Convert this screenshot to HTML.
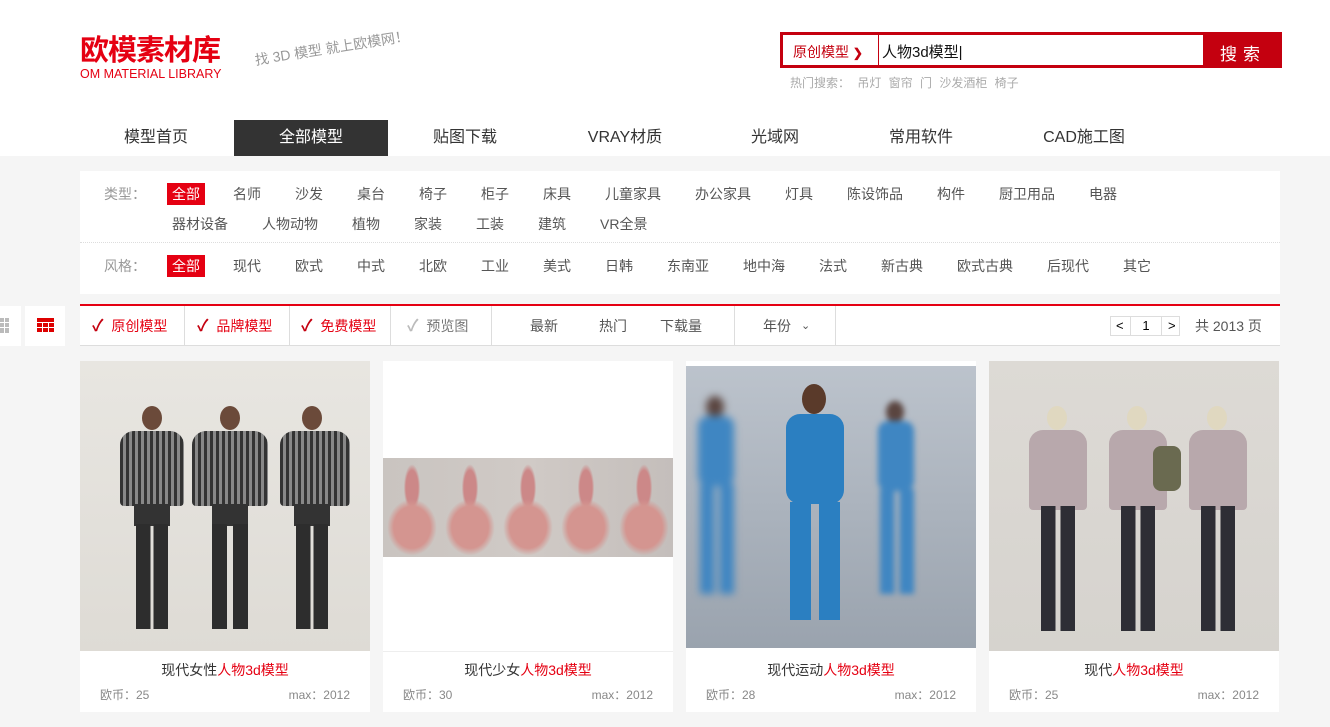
<!DOCTYPE html>
<html><head><meta charset="utf-8"><style>
*{margin:0;padding:0;box-sizing:border-box}
body{width:1330px;height:727px;overflow:hidden;background:#f5f5f5;font-family:"Liberation Sans","Noto Sans CJK SC",sans-serif;position:relative}
.a{position:absolute}
.top{left:0;top:0;width:1330px;height:156px;background:#fff}
.nav span{position:absolute;top:120px;height:36px;line-height:36px;font-size:16px;color:#333;text-align:center}
.fb{left:80px;top:171px;width:1200px;height:123px;background:#fff;font-size:14px;color:#555}
.fb span{position:absolute;white-space:nowrap}
.sel{background:#e50012;color:#fff!important;padding:0 5px;height:22px;line-height:22px}
.tb{left:80px;top:304px;width:1200px;height:42px;background:#fff;border-top:2px solid #e50012;border-bottom:1px solid #ddd;font-size:14px}
.tb span{position:absolute;top:0;height:40px;line-height:40px;white-space:nowrap}
.sep{position:absolute;top:0;width:1px;height:40px;background:#ddd}
.card{top:361px;width:290px;height:351px;background:#fff}
.card .img{position:absolute;left:0;top:0;width:290px;height:290px;overflow:hidden}
.card .t{position:absolute;top:299px;width:290px;text-align:center;font-size:14px;color:#333}
.card .t b{font-weight:normal;color:#e50012}
.card .m{position:absolute;top:325px;font-size:12px;color:#888}
.fig{position:absolute}
.fig i{position:absolute;display:block}
</style></head><body>
<div class="a top"></div>
<div class="a" style="left:80px;top:35px;font-size:29px;font-weight:bold;color:#e50012;letter-spacing:-1px;line-height:32px">欧模素材库</div>
<div class="a" style="left:80px;top:67px;font-size:12.5px;color:#e50012">OM MATERIAL LIBRARY</div>
<div class="a" style="left:255px;top:50px;font-size:14px;color:#999;transform:rotate(-9deg);transform-origin:left;white-space:nowrap">找 3D 模型 就上欧模网！</div>
<div class="a" style="left:780px;top:32px;width:502px;height:36px;background:#c4000f"></div>
<div class="a" style="left:783px;top:35px;width:420px;height:30px;background:#fff"></div>
<div class="a" style="left:878px;top:35px;width:1px;height:30px;background:#c4000f"></div>
<div class="a" style="left:793px;top:42px;font-size:14px;color:#c4000f">原创模型 <span style="font-size:12px;font-weight:bold">❯</span></div>
<div class="a" style="left:882px;top:41px;font-size:15px;color:#111">人物3d模型|</div>
<div class="a" style="left:1220px;top:40px;font-size:17px;color:#fff;letter-spacing:6px">搜索</div>
<div class="a" style="left:790px;top:74px;font-size:12px;color:#aaa;word-spacing:4px">热门搜索： 吊灯 窗帘 门 沙发酒柜 椅子</div>
<div class="nav">
<span style="left:104px;width:104px">模型首页</span>
<span style="left:234px;width:154px;background:#333;color:#fff">全部模型</span>
<span style="left:410px;width:110px">贴图下载</span>
<span style="left:570px;width:110px">VRAY材质</span>
<span style="left:720px;width:110px">光域网</span>
<span style="left:866px;width:110px">常用软件</span>
<span style="left:1024px;width:120px">CAD施工图</span>
</div>
<div class="a fb">
<span style="left:24px;top:13px;color:#999">类型：</span>
<span class="sel" style="left:87px;top:12px">全部</span>
<span style="left:153px;top:13px">名师</span><span style="left:215px;top:13px">沙发</span><span style="left:277px;top:13px">桌台</span><span style="left:339px;top:13px">椅子</span><span style="left:401px;top:13px">柜子</span><span style="left:463px;top:13px">床具</span><span style="left:525px;top:13px">儿童家具</span><span style="left:615px;top:13px">办公家具</span><span style="left:705px;top:13px">灯具</span><span style="left:767px;top:13px">陈设饰品</span><span style="left:857px;top:13px">构件</span><span style="left:919px;top:13px">厨卫用品</span><span style="left:1009px;top:13px">电器</span>
<span style="left:92px;top:43px">器材设备</span><span style="left:182px;top:43px">人物动物</span><span style="left:272px;top:43px">植物</span><span style="left:334px;top:43px">家装</span><span style="left:396px;top:43px">工装</span><span style="left:458px;top:43px">建筑</span><span style="left:520px;top:43px">VR全景</span>
<div class="a" style="left:0;top:71px;width:1200px;border-top:1px dotted #ddd"></div>
<span style="left:24px;top:85px;color:#999">风格：</span>
<span class="sel" style="left:87px;top:84px">全部</span>
<span style="left:153px;top:85px">现代</span><span style="left:215px;top:85px">欧式</span><span style="left:277px;top:85px">中式</span><span style="left:339px;top:85px">北欧</span><span style="left:401px;top:85px">工业</span><span style="left:463px;top:85px">美式</span><span style="left:525px;top:85px">日韩</span><span style="left:587px;top:85px">东南亚</span><span style="left:663px;top:85px">地中海</span><span style="left:739px;top:85px">法式</span><span style="left:801px;top:85px">新古典</span><span style="left:877px;top:85px">欧式古典</span><span style="left:967px;top:85px">后现代</span><span style="left:1043px;top:85px">其它</span>
</div>
<div class="a" style="left:0;top:306px;width:21px;height:40px;background:#fff"></div>
<div class="a" style="left:0;top:318px;width:10px;height:15px;background:repeating-linear-gradient(90deg,#bbb 0 4px,#fff 4px 5px)"></div>
<div class="a" style="left:0;top:322px;width:10px;height:1px;background:#fff"></div><div class="a" style="left:0;top:327px;width:10px;height:1px;background:#fff"></div>
<div class="a" style="left:25px;top:306px;width:40px;height:40px;background:#fff"></div>
<div class="a" style="left:37px;top:318px;width:17px;height:15px;background:repeating-linear-gradient(#d00 0 4px,#fff 4px 5px)"></div>
<div class="a" style="left:42px;top:322px;width:1px;height:11px;background:#fff"></div><div class="a" style="left:48px;top:322px;width:1px;height:11px;background:#fff"></div>
<div class="a tb">
<span style="left:12px;color:#e50012"><b style="color:#c4000f;font-size:16px">✓</b>&nbsp; 原创模型</span><div class="sep" style="left:104px"></div>
<span style="left:117px;color:#e50012"><b style="color:#c4000f;font-size:16px">✓</b>&nbsp; 品牌模型</span><div class="sep" style="left:209px"></div>
<span style="left:221px;color:#e50012"><b style="color:#c4000f;font-size:16px">✓</b>&nbsp; 免费模型</span><div class="sep" style="left:310px"></div>
<span style="left:327px;color:#777"><b style="color:#bbb;font-size:16px">✓</b>&nbsp; 预览图</span><div class="sep" style="left:411px"></div>
<span style="left:450px;color:#555">最新</span><span style="left:519px;color:#555">热门</span><span style="left:580px;color:#555">下载量</span>
<div class="sep" style="left:654px"></div>
<span style="left:683px;color:#555">年份 <span style="font-size:11px;margin-left:10px">⌄</span></span>
<div class="sep" style="left:755px"></div>
<div class="a" style="left:1030px;top:10px;width:70px;height:20px;border:1px solid #ddd;font-size:13px;line-height:18px"><span style="left:5px;height:18px;line-height:18px">&lt;</span><span style="left:19px;width:32px;height:18px;line-height:18px;text-align:center;border-left:1px solid #ddd;border-right:1px solid #ddd">1</span><span style="left:57px;height:18px;line-height:18px">&gt;</span></div>
<span style="left:1115px;color:#555">共 2013 页</span>
</div>

<div class="a card" style="left:80px"><div class="img" style="background:linear-gradient(#e8e6e1,#dedbd5)">
<div class="fig" style="left:40px;top:45px"><i style="left:22px;top:0;width:20px;height:24px;border-radius:50%;background:#6b4a3a"></i><i style="left:0;top:25px;width:64px;height:75px;border-radius:14px 14px 4px 4px;background:repeating-linear-gradient(90deg,#333 0 3px,#888 3px 6px)"></i><i style="left:14px;top:98px;width:36px;height:22px;background:#333"></i><i style="left:16px;top:118px;width:32px;height:105px;background:linear-gradient(90deg,#2d2d2d 0 45%,transparent 45% 55%,#2d2d2d 55%)"></i></div>
<div class="fig" style="left:118px;top:45px"><i style="left:22px;top:0;width:20px;height:24px;border-radius:50%;background:#6b4a3a"></i><i style="left:-6px;top:25px;width:76px;height:75px;border-radius:14px 14px 4px 4px;background:repeating-linear-gradient(90deg,#333 0 3px,#888 3px 6px)"></i><i style="left:14px;top:98px;width:36px;height:22px;background:#333"></i><i style="left:14px;top:118px;width:36px;height:105px;background:linear-gradient(90deg,#2d2d2d 0 42%,transparent 42% 58%,#2d2d2d 58%)"></i></div>
<div class="fig" style="left:200px;top:45px"><i style="left:22px;top:0;width:20px;height:24px;border-radius:50%;background:#6b4a3a"></i><i style="left:0;top:25px;width:70px;height:75px;border-radius:14px 14px 4px 4px;background:repeating-linear-gradient(90deg,#333 0 3px,#888 3px 6px)"></i><i style="left:14px;top:98px;width:36px;height:22px;background:#333"></i><i style="left:16px;top:118px;width:32px;height:105px;background:linear-gradient(90deg,#2d2d2d 0 45%,transparent 45% 55%,#2d2d2d 55%)"></i></div>
</div><div class="t">现代女性<b>人物3d模型</b></div><div class="m" style="left:20px">欧币：25</div><div class="m" style="right:20px">max：2012</div></div>

<div class="a card" style="left:383px"><div class="img" style="background:#fff"><div class="a" style="left:0;top:97px;width:290px;height:99px;background:radial-gradient(ellipse 9% 30% at 10% 70%,#d49590 0 70%,transparent 95%),radial-gradient(ellipse 9% 30% at 30% 70%,#d49590 0 70%,transparent 95%),radial-gradient(ellipse 9% 30% at 50% 70%,#d49590 0 70%,transparent 95%),radial-gradient(ellipse 9% 30% at 70% 70%,#d49590 0 70%,transparent 95%),radial-gradient(ellipse 9% 30% at 90% 70%,#d49590 0 70%,transparent 95%),radial-gradient(ellipse 3% 25% at 10% 30%,#c88 0 70%,transparent 95%),radial-gradient(ellipse 3% 25% at 30% 30%,#c88 0 70%,transparent 95%),radial-gradient(ellipse 3% 25% at 50% 30%,#c88 0 70%,transparent 95%),radial-gradient(ellipse 3% 25% at 70% 30%,#c88 0 70%,transparent 95%),radial-gradient(ellipse 3% 25% at 90% 30%,#c88 0 70%,transparent 95%),linear-gradient(90deg,#c9c4c0,#d0cac6,#c4bebb)"></div></div><div class="a" style="left:0;top:290px;width:290px;border-top:1px solid #eee"></div><div class="t">现代少女<b>人物3d模型</b></div><div class="m" style="left:20px">欧币：30</div><div class="m" style="right:20px">max：2012</div></div>

<div class="a card" style="left:686px"><div class="img" style="top:5px;height:282px;background:linear-gradient(#bcc3cc,#9aa3ae)">
<div class="fig" style="left:12px;top:30px;filter:blur(4px)"><i style="left:8px;top:0;width:18px;height:22px;border-radius:50%;background:#5a4540"></i><i style="left:0;top:20px;width:36px;height:70px;border-radius:10px;background:#3f86c2"></i><i style="left:2px;top:88px;width:34px;height:110px;background:linear-gradient(90deg,#3f86c2 0 42%,transparent 42% 58%,#3f86c2 58%)"></i></div>
<div class="fig" style="left:100px;top:18px"><i style="left:16px;top:0;width:24px;height:30px;border-radius:50%;background:#5a3a2a"></i><i style="left:0;top:30px;width:58px;height:90px;border-radius:14px;background:#2b7fc1"></i><i style="left:4px;top:118px;width:50px;height:118px;background:linear-gradient(90deg,#2b7fc1 0 42%,transparent 42% 58%,#2b7fc1 58%)"></i></div>
<div class="fig" style="left:192px;top:35px;filter:blur(3px)"><i style="left:8px;top:0;width:18px;height:22px;border-radius:50%;background:#5a4540"></i><i style="left:0;top:20px;width:36px;height:70px;border-radius:10px;background:#3f86c2"></i><i style="left:2px;top:88px;width:34px;height:105px;background:linear-gradient(90deg,#3f86c2 0 42%,transparent 42% 58%,#3f86c2 58%)"></i></div>
</div><div class="t">现代运动<b>人物3d模型</b></div><div class="m" style="left:20px">欧币：28</div><div class="m" style="right:20px">max：2012</div></div>

<div class="a card" style="left:989px"><div class="img" style="background:linear-gradient(#dddad5,#d6d3ce)">
<div class="fig" style="left:40px;top:45px"><i style="left:18px;top:0;width:20px;height:24px;border-radius:50%;background:#e0d8c0"></i><i style="left:0;top:24px;width:58px;height:80px;border-radius:14px 14px 4px 4px;background:#b8a8ac"></i><i style="left:12px;top:100px;width:34px;height:125px;background:linear-gradient(90deg,#2e2e35 0 42%,transparent 42% 58%,#2e2e35 58%)"></i></div>
<div class="fig" style="left:120px;top:45px"><i style="left:18px;top:0;width:20px;height:24px;border-radius:50%;background:#e0d8c0"></i><i style="left:0;top:24px;width:58px;height:80px;border-radius:14px 14px 4px 4px;background:#b8a8ac"></i><i style="left:44px;top:40px;width:28px;height:45px;border-radius:8px;background:#6a6a50"></i><i style="left:12px;top:100px;width:34px;height:125px;background:linear-gradient(90deg,#2e2e35 0 42%,transparent 42% 58%,#2e2e35 58%)"></i></div>
<div class="fig" style="left:200px;top:45px"><i style="left:18px;top:0;width:20px;height:24px;border-radius:50%;background:#e0d8c0"></i><i style="left:0;top:24px;width:58px;height:80px;border-radius:14px 14px 4px 4px;background:#b8a8ac"></i><i style="left:12px;top:100px;width:34px;height:125px;background:linear-gradient(90deg,#2e2e35 0 42%,transparent 42% 58%,#2e2e35 58%)"></i></div>
</div><div class="t">现代<b>人物3d模型</b></div><div class="m" style="left:20px">欧币：25</div><div class="m" style="right:20px">max：2012</div></div>
</body></html>
